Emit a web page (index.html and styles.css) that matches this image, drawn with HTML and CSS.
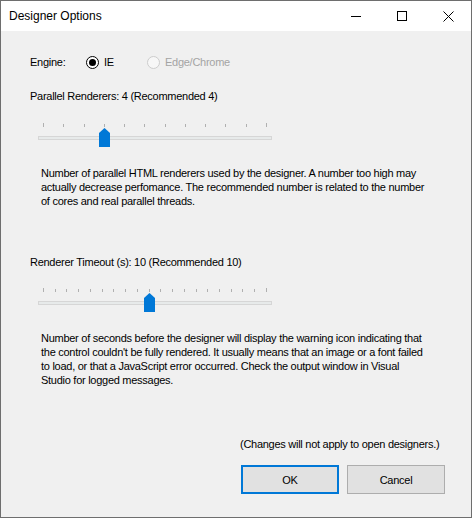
FILE: index.html
```html
<!DOCTYPE html>
<html>
<head>
<meta charset="utf-8">
<link rel="stylesheet" href="styles.css">
</head>
<body>
<div class="window">
  <div class="titlebar">
    <span class="title">Designer Options</span>
    <div class="controls">
      <span class="ctl"><svg width="10" height="10" viewBox="0 0 10 10"><line x1="0" y1="5.5" x2="10" y2="5.5" stroke="#000" stroke-width="1"/></svg></span>
      <span class="ctl"><svg width="10" height="10" viewBox="0 0 10 10"><rect x="0.5" y="0.5" width="9" height="9" fill="none" stroke="#000" stroke-width="1"/></svg></span>
      <span class="ctl"><svg width="11" height="11" viewBox="0 0 11 11"><path d="M0.5 0.5 L10.5 10.5 M10.5 0.5 L0.5 10.5" stroke="#000" stroke-width="1" fill="none"/></svg></span>
    </div>
  </div>
  <div class="content">
    <div class="engine-row">
      <span class="engine-label">Engine:</span>
      <span class="radio radio-ie">
        <svg class="radio-circle" width="13" height="13" viewBox="0 0 13 13"><circle cx="6.5" cy="6.5" r="6" fill="#fff" stroke="#000" stroke-width="1"/><circle cx="6.5" cy="6.5" r="3.5" fill="#000"/></svg>
        <span>IE</span>
      </span>
      <span class="radio radio-disabled">
        <svg class="radio-circle" width="13" height="13" viewBox="0 0 13 13"><circle cx="6.5" cy="6.5" r="6" fill="#f7f7f7" stroke="#cccccc" stroke-width="1"/></svg>
        <span>Edge/Chrome</span>
      </span>
    </div>

    <div class="label label-1">Parallel Renderers: 4 (Recommended 4)</div>
    <div class="slider slider-1">
      <div class="ticks">
        <i class="tick end"></i><i class="tick"></i><i class="tick"></i><i class="tick"></i><i class="tick"></i><i class="tick"></i><i class="tick"></i><i class="tick"></i><i class="tick"></i><i class="tick"></i><i class="tick"></i><i class="tick end"></i>
      </div>
      <div class="track"></div>
      <svg class="thumb" style="left:61px" width="11" height="19" viewBox="0 0 11 19"><polygon points="0,5 5.5,0 11,5 11,19 0,19" fill="#0078d7"/></svg>
    </div>
    <p class="desc desc-1">Number of parallel HTML renderers used by the designer. A number too high may<br>actually decrease perfomance. The recommended number is related to the number<br>of cores and real parallel threads.</p>

    <div class="label label-2">Renderer Timeout (s): 10 (Recommended 10)</div>
    <div class="slider slider-2">
      <div class="ticks">
        <i class="tick end"></i><i class="tick"></i><i class="tick"></i><i class="tick"></i><i class="tick"></i><i class="tick"></i><i class="tick"></i><i class="tick"></i><i class="tick"></i><i class="tick"></i><i class="tick"></i><i class="tick"></i><i class="tick"></i><i class="tick"></i><i class="tick"></i><i class="tick"></i><i class="tick"></i><i class="tick"></i><i class="tick"></i><i class="tick end"></i>
      </div>
      <div class="track"></div>
      <svg class="thumb" style="left:106px" width="11" height="19" viewBox="0 0 11 19"><polygon points="0,5 5.5,0 11,5 11,19 0,19" fill="#0078d7"/></svg>
    </div>
    <p class="desc desc-2">Number of seconds before the designer will display the warning icon indicating that<br>the control couldn't be fully rendered. It usually means that an image or a font failed<br>to load, or that a JavaScript error occurred. Check the output window in Visual<br>Studio for logged messages.</p>

    <div class="note">(Changes will not apply to open designers.)</div>
    <div class="buttons">
      <button class="btn btn-ok">OK</button>
      <button class="btn btn-cancel">Cancel</button>
    </div>
  </div>
</div>
</body>
</html>
```

FILE: styles.css
```css
* { box-sizing: border-box; }
html, body { margin: 0; padding: 0; background: #f0f0f0; }
.window {
  width: 472px;
  height: 518px;
  border: 1px solid #6e6e6e;
  background: #f0f0f0;
  font-family: "Liberation Sans", Arial, sans-serif;
  font-size: 11px;
  color: #000;
  overflow: hidden;
}
.titlebar {
  display: flex;
  align-items: center;
  height: 30px;
  background: #fff;
}
.title {
  flex: 1;
  padding-left: 8px;
  font-size: 12px;
  line-height: 30px;
}
.controls { display: flex; }
.ctl {
  width: 46px;
  height: 30px;
  display: flex;
  align-items: center;
  justify-content: center;
}
.ctl svg { display: block; }

.content {
  display: flex;
  flex-direction: column;
  align-items: flex-start;
  letter-spacing: -0.27px;
  line-height: 13px;
}
.engine-row {
  display: flex;
  align-items: center;
  height: 13px;
  margin-top: 25px;
  padding-left: 29px;
}
.engine-label { width: 56px; }
.radio { display: flex; align-items: center; gap: 5px; }
.radio-circle { display: block; }
.radio-ie { width: 61px; }
.radio-disabled { color: #a4a4a4; }

.label { margin-left: 29px; height: 13px; white-space: nowrap; }
.label-1 { margin-top: 21px; }
.label-2 { margin-top: 48px; }

.slider {
  position: relative;
  margin-left: 37px;
  width: 234px;
  height: 17px;
}
.slider-1 { margin-top: 20px; }
.slider-2 { margin-top: 19px; }
.ticks {
  display: flex;
  justify-content: space-between;
  align-items: flex-end;
  height: 4px;
  margin: 0 5px;
}
.tick { display: block; width: 1px; height: 3px; background: #b0b0b0; }
.tick.end { height: 4px; }
.track {
  margin-top: 9px;
  height: 4px;
  background: #e7eaea;
  border: 1px solid #d6d6d6;
}
.thumb { position: absolute; top: 5px; display: block; }

.desc {
  margin: 26px 0 0 40px;
  line-height: 14px;
  white-space: nowrap;
}
.note { margin-top: 51px; margin-left: 239px; height: 13px; white-space: nowrap; }
.buttons {
  display: flex;
  gap: 8px;
  margin-top: 14px;
  margin-left: 240px;
}
.btn {
  width: 98px;
  height: 29px;
  background: #e1e1e1;
  border: 1px solid #adadad;
  font-family: "Liberation Sans", Arial, sans-serif;
  font-size: 11px;
  letter-spacing: -0.27px;
  color: #000;
  padding: 0;
  margin: 0;
}
.btn-ok { border: 2px solid #0078d7; }
```
